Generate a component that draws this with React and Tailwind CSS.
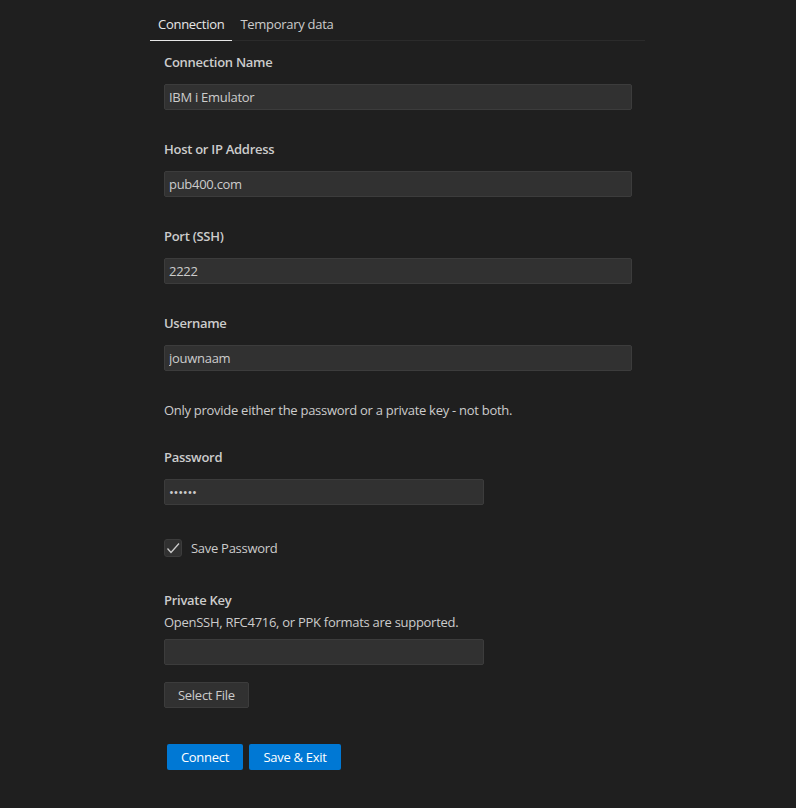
import React, { useState } from 'react';

const Field = ({ label, value, width = 'w-[468px]', type = 'text', className = '' }) => (
    <div className={className}>
        <div className="h-[18px] leading-[18px] font-semibold text-[13px] text-[#cccccc]">{label}</div>
        <input
            type={type}
            defaultValue={value}
            className={`mt-[13px] block h-[26px] ${width} bg-[#313131] border border-[#3c3c3c] rounded-[2px] px-[4px] text-[13px] tracking-[-0.28px] text-[#cccccc] outline-none`}
        />
    </div>
);

const App = () => {
    const [tab, setTab] = useState('connection');
    const [savePw, setSavePw] = useState(true);

    return (
        <div className="min-h-[808px] w-full bg-[#1f1f1f] text-[#cccccc] text-[13px] tracking-[-0.28px]" style={{ fontFamily: '"Open Sans", "Noto Sans", sans-serif' }}>
            <div className="ml-[150px] w-[495px] pt-[8px]">
                {/* tabs */}
                <div className="flex border-b border-[#2b2b2b] h-[33px]">
                    <button
                        onClick={() => setTab('connection')}
                        className={`px-[8px] pt-[1px] h-[33px] text-[13px] tracking-[-0.28px] ${tab === 'connection' ? 'text-[#e7e7e7] border-b border-[#e7e7e7]' : 'text-[#cccccc]'}`}
                    >
                        Connection
                    </button>
                    <button
                        onClick={() => setTab('temp')}
                        className={`px-[8px] pt-[1px] h-[33px] text-[13px] tracking-[-0.28px] ${tab === 'temp' ? 'text-[#e7e7e7] border-b border-[#e7e7e7]' : 'text-[#cccccc]'}`}
                    >
                        Temporary data
                    </button>
                </div>

                <div className="pl-[14px] pt-[12px]">
                    <Field label="Connection Name" value="IBM i Emulator" />
                    <Field label="Host or IP Address" value="pub400.com" className="mt-[30px]" />
                    <Field label="Port (SSH)" value="2222" className="mt-[30px]" />
                    <Field label="Username" value="jouwnaam" className="mt-[30px]" />

                    <div className="mt-[30px] h-[18px] leading-[18px]">Only provide either the password or a private key - not both.</div>

                    <Field label="Password" value="jouwww" type="password" width="w-[320px]" className="mt-[29px]" />

                    <label className="mt-[34px] flex items-center gap-[9px] cursor-pointer h-[18px]">
                        <span
                            onClick={() => setSavePw(!savePw)}
                            className="w-[18px] h-[18px] rounded-[3px] bg-[#313131] border border-[#3c3c3c] flex items-center justify-center"
                        >
                            {savePw && (
                                <svg width="16" height="16" viewBox="0 0 16 16" fill="none">
                                    <path d="M2.5 8.5 L6 12.5 L14 3.5" stroke="#cccccc" strokeWidth="1.3" />
                                </svg>
                            )}
                        </span>
                        <span className="pt-[1px]">Save Password</span>
                    </label>

                    <div className="mt-[34px] h-[18px] leading-[18px] font-semibold">Private Key</div>
                    <div className="mt-[4px] h-[18px] leading-[18px]">OpenSSH, RFC4716, or PPK formats are supported.</div>
                    <input className="mt-[8px] block h-[26px] w-[320px] bg-[#313131] border border-[#3c3c3c] rounded-[2px] px-[4px] text-[13px] outline-none" />

                    <button className="mt-[17px] block h-[26px] px-[13px] pt-[1px] bg-[#313131] border border-[#3c3c3c] rounded-[2px] text-[#cccccc] text-[13px] tracking-[-0.28px]">
                        Select File
                    </button>

                    <div className="mt-[36px] flex gap-[6px] pl-[3px]">
                        <button className="h-[26px] w-[76px] pt-[1px] bg-[#0078d4] rounded-[2px] text-white text-[13px] tracking-[-0.28px]">Connect</button>
                        <button className="h-[26px] w-[92px] pt-[1px] bg-[#0078d4] rounded-[2px] text-white text-[13px] tracking-[-0.28px]">Save &amp; Exit</button>
                    </div>
                </div>
            </div>
        </div>
    );
};

export default App;
